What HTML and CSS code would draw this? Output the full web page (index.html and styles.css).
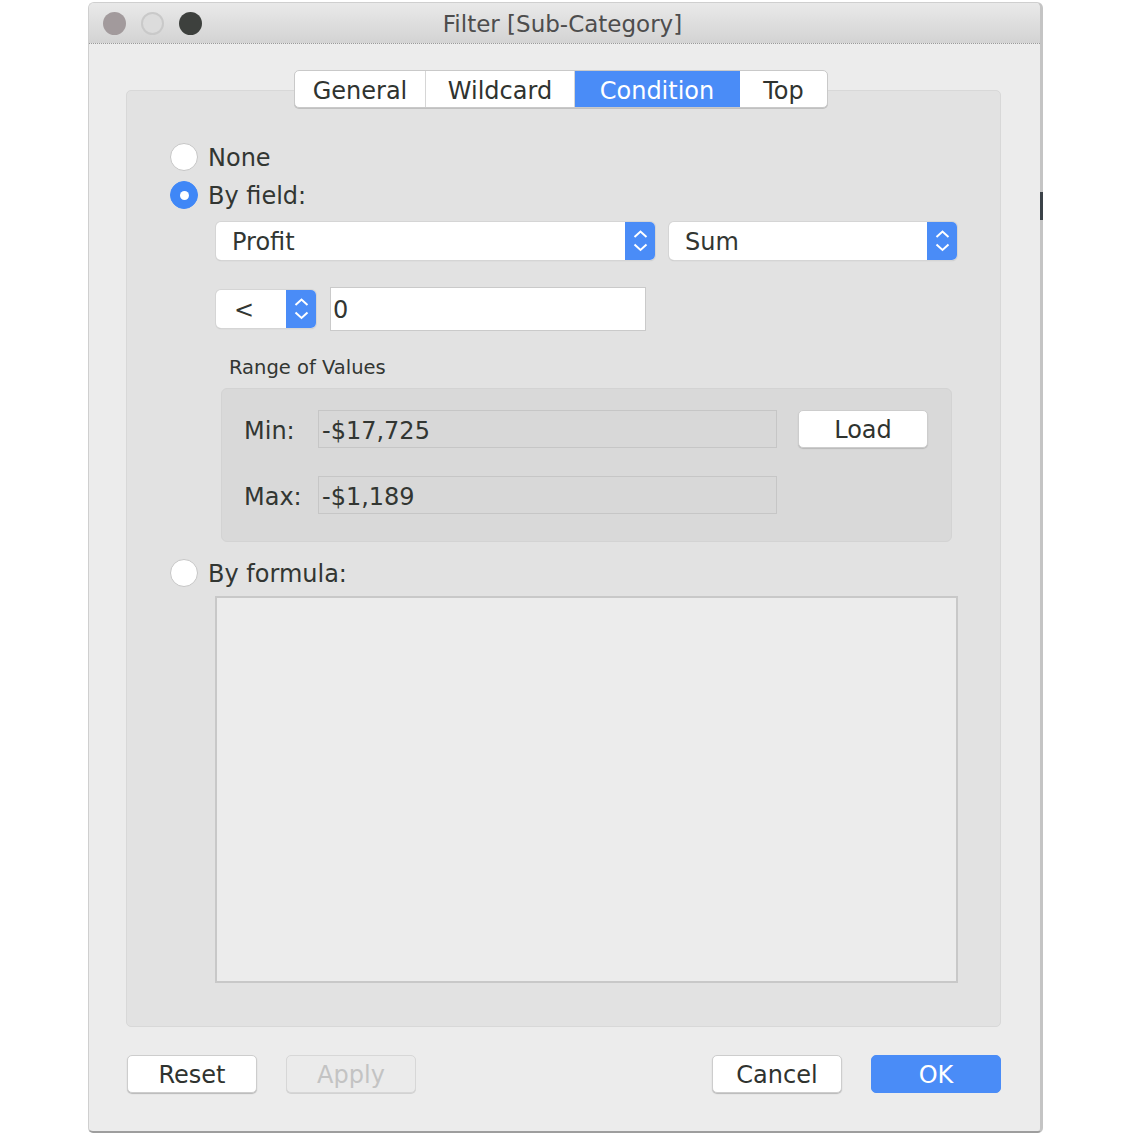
FILE: index.html
```html
<!DOCTYPE html>
<html>
<head>
<meta charset="utf-8">
<title>Filter [Sub-Category]</title>
<link rel="stylesheet" href="styles.css">
</head>
<body>
<div class="window">
  <div class="titlebar">
    <div class="lights">
      <span class="light light-close"></span>
      <span class="light light-min"></span>
      <span class="light light-max"></span>
    </div>
    <div class="title">Filter [Sub-Category]</div>
    <div></div>
  </div>
  <span class="edge-mark"></span>
  <div class="body">
    <div class="tabs">
      <div class="tab tab-general">General</div>
      <div class="tab tab-wildcard">Wildcard</div>
      <div class="tab tab-condition active">Condition</div>
      <div class="tab tab-top">Top</div>
    </div>
    <div class="panel">
      <div class="radio-row"><span class="radio"></span><span class="radio-label">None</span></div>
      <div class="radio-row"><span class="radio on"></span><span class="radio-label">By field:</span></div>
      <div class="sub">
        <div class="select-row">
          <div class="select select-field"><span class="select-text">Profit</span><span class="stepper"><svg width="30" height="38" viewBox="0 0 30 38"><path d="M9.5 15 L15.5 9.5 L21.5 15 M9.5 22.5 L15.5 28 L21.5 22.5" fill="none" stroke="#fff" stroke-width="2"/></svg></span></div>
          <div class="select select-agg"><span class="select-text">Sum</span><span class="stepper"><svg width="30" height="38" viewBox="0 0 30 38"><path d="M9.5 15 L15.5 9.5 L21.5 15 M9.5 22.5 L15.5 28 L21.5 22.5" fill="none" stroke="#fff" stroke-width="2"/></svg></span></div>
        </div>
        <div class="op-row">
          <div class="select select-op"><span class="select-text">&lt;</span><span class="stepper"><svg width="30" height="38" viewBox="0 0 30 38"><path d="M9.5 15 L15.5 9.5 L21.5 15 M9.5 22.5 L15.5 28 L21.5 22.5" fill="none" stroke="#fff" stroke-width="2"/></svg></span></div>
          <div class="input">0</div>
        </div>
        <div class="range-label">Range of Values</div>
        <div class="range">
          <div class="range-row">
            <span class="range-key">Min:</span>
            <div class="range-field">-$17,725</div>
            <div class="btn btn-load">Load</div>
          </div>
          <div class="range-row">
            <span class="range-key">Max:</span>
            <div class="range-field">-$1,189</div>
          </div>
        </div>
      </div>
      <div class="radio-row formula-row"><span class="radio"></span><span class="radio-label">By formula:</span></div>
      <div class="formula"></div>
    </div>
    <div class="footer">
      <div class="btn-group">
        <div class="btn">Reset</div>
        <div class="btn disabled">Apply</div>
      </div>
      <div class="btn-group">
        <div class="btn">Cancel</div>
        <div class="btn primary">OK</div>
      </div>
    </div>
  </div>
</div>
</body>
</html>
```
FILE: styles.css
```css
* { box-sizing: border-box; }
html, body { margin: 0; padding: 0; background: #fff; }
body {
  font-family: "DejaVu Sans", "Liberation Sans", sans-serif;
  color: #323632;
  font-size: 24px;
}
.window {
  position: relative;
  margin: 2px 0 0 88px;
  width: 955px;
  height: 1131px;
  background: #ececec;
  border: 1px solid #cfcfcf;
  border-right: 3px solid #c4c4c4;
  border-bottom: 2px solid #9e9e9e;
  border-radius: 6px 6px 5px 5px;
  display: flex;
  flex-direction: column;
}
.titlebar {
  height: 41px;
  flex: none;
  display: grid;
  grid-template-columns: 1fr auto 1fr;
  align-items: center;
  background: linear-gradient(#e9e9e9, #d3d3d3);
  border-bottom: 1px dotted #9a9a9a;
  border-radius: 5px 5px 0 0;
}
.lights {
  display: flex;
  gap: 15px;
  padding-left: 14px;
}
.light {
  width: 23px;
  height: 23px;
  border-radius: 50%;
  display: block;
}
.light-close { background: #a29a9c; }
.light-min { background: #dcdcdc; border: 2px solid #c9c9c9; }
.light-max { background: #3d403d; }
.title {
  font-size: 23px;
  color: #4d4d4d;
  white-space: nowrap;
  padding-top: 2px;
  margin-left: -4px;
}
.edge-mark {
  position: absolute;
  right: -3px;
  top: 189px;
  width: 3px;
  height: 28px;
  background: #3b4248;
}
.body {
  flex: 1;
  display: flex;
  flex-direction: column;
  padding: 26px 0 0 37px;
}
.tabs {
  position: relative;
  z-index: 1;
  margin-left: 168px;
  display: flex;
  height: 38px;
  width: 534px;
  background: #fff;
  border: 1px solid #c9c9c9;
  border-radius: 5px;
  box-shadow: 0 1px 0 #c0c0c0;
  overflow: hidden;
}
.tab {
  display: flex;
  align-items: center;
  justify-content: center;
  height: 100%;
  padding-top: 3px;
  color: #2f332f;
  border-right: 1px solid #d6d6d6;
}
.tab-general { width: 131px; }
.tab-wildcard { width: 149px; }
.tab-condition { width: 165px; }
.tab-top { width: 87px; border-right: 0; }
.tab.active { background: #4a8cf7; color: #fff; border-right-color: #4a8cf7; }
.panel {
  margin-top: -18px;
  width: 875px;
  height: 937px;
  background: #e2e2e2;
  border: 1px solid #d8d8d8;
  border-radius: 5px;
  padding: 47px 0 0 43px;
  display: flex;
  flex-direction: column;
}
.radio-row {
  height: 38px;
  display: flex;
  align-items: center;
  gap: 10px;
}
.radio-label { padding-top: 2px; }
.radio {
  width: 28px;
  height: 28px;
  border-radius: 50%;
  background: #fff;
  border: 1px solid #c6c6c6;
  display: flex;
  align-items: center;
  justify-content: center;
}
.radio.on { background: #3f87f7; border-color: #3f87f7; }
.radio.on::after {
  content: "";
  width: 9px;
  height: 9px;
  border-radius: 50%;
  background: #fff;
}
.sub {
  margin-left: 46px;
  display: flex;
  flex-direction: column;
}
.select-row {
  margin-top: 8px;
  display: flex;
  gap: 14px;
}
.select {
  height: 38px;
  display: flex;
  background: #fff;
  border-radius: 5px;
  box-shadow: 0 0 0 1px #d5d5d5, 0 1px 1px #b3b3b3;
}
.select-text {
  flex: 1;
  display: flex;
  align-items: center;
  padding-left: 16px;
  padding-top: 2px;
}
.stepper {
  width: 30px;
  height: 38px;
  background: #4a8cf7;
  border-radius: 0 5px 5px 0;
  display: block;
}
.stepper svg { display: block; }
.select-field { width: 439px; }
.select-agg { width: 288px; }
.select-op { width: 100px; }
.select-op .select-text { padding-left: 18px; }
.op-row {
  margin-top: 27px;
  height: 44px;
  display: flex;
  align-items: center;
  gap: 14px;
}
.input {
  width: 316px;
  height: 44px;
  background: #fff;
  border: 1px solid #cacaca;
  padding-left: 2px;
  padding-top: 1px;
  display: flex;
  align-items: center;
}
.range-label {
  margin-top: 25px;
  padding-left: 13px;
  font-size: 19.5px;
  line-height: 23px;
}
.range {
  margin-top: 9px;
  margin-left: 5px;
  width: 731px;
  height: 154px;
  background: #d9d9d9;
  border: 1px solid #d3d3d3;
  border-radius: 6px;
  padding: 21px 0 0 22px;
}
.range-row {
  height: 38px;
  display: flex;
  align-items: center;
}
.range-row + .range-row { margin-top: 28px; }
.range-key { width: 74px; padding-top: 3px; }
.range-field {
  width: 459px;
  height: 38px;
  background: #d8d8d8;
  border: 1px solid #c6c6c6;
  padding-left: 3px;
  padding-top: 3px;
  display: flex;
  align-items: center;
}
.btn {
  width: 130px;
  height: 38px;
  display: flex;
  align-items: center;
  justify-content: center;
  padding-top: 2px;
  background: #fff;
  border: 1px solid #cdcdcd;
  border-radius: 5px;
  box-shadow: 0 1px 1px #b9b9b9;
  color: #2f332f;
}
.btn-load { margin-left: 21px; }
.btn.disabled {
  background: #ebebeb;
  border-color: #d7d7d7;
  box-shadow: 0 1px 0 #d2d2d2;
  color: #c3c3c3;
}
.btn.primary {
  background: #4a8cf7;
  border-color: #4a8cf7;
  box-shadow: none;
  color: #fff;
}
.formula-row { margin-top: 12px; }
.formula {
  margin-top: 4px;
  margin-left: 45px;
  width: 743px;
  height: 387px;
  background: #ececec;
  border: 2px solid #c8c8c8;
}
.footer {
  margin-top: 28px;
  margin-left: 1px;
  width: 874px;
  display: flex;
  justify-content: space-between;
}
.btn-group {
  display: flex;
  gap: 29px;
}
```
